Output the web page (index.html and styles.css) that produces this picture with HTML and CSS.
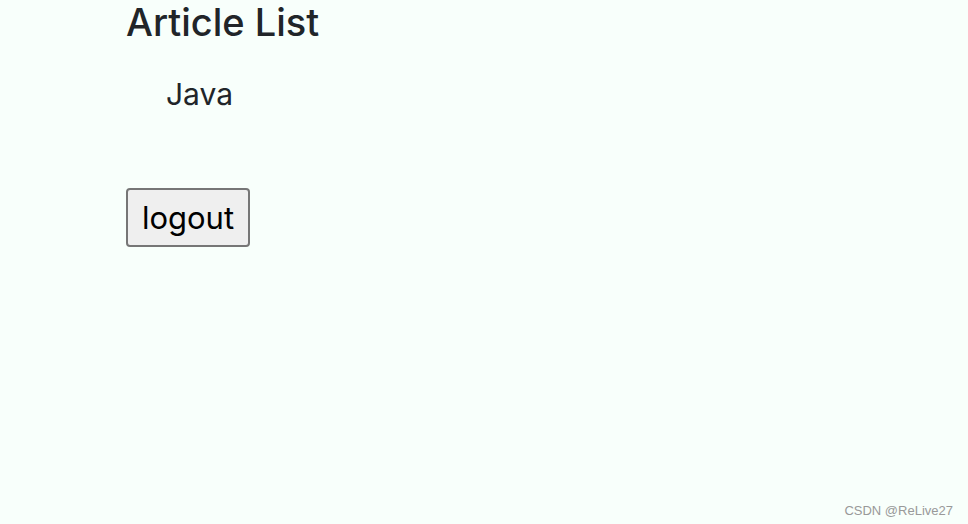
FILE: index.html
```html
<!DOCTYPE html>
<html>
<head>
<meta charset="utf-8">
<link rel="stylesheet" href="styles.css">
</head>
<body>
<div class="page">
  <h1 class="title">Article List</h1>
  <ul class="articles">
    <li class="article">Java</li>
  </ul>
  <button class="logout">logout</button>
</div>
<div class="watermark">CSDN @ReLive27</div>
</body>
</html>
```
FILE: styles.css
```css
html, body {
  margin: 0;
  height: 100%;
}
body {
  background: #f8fffb;
  color: #212529;
  font-family: Inter, "Liberation Sans", sans-serif;
  overflow: hidden;
  position: relative;
}
.page {
  padding-left: 126px;
  padding-top: 0;
}
.title {
  margin: 0;
  font-size: 38px;
  font-weight: 500;
  line-height: 44px;
}
.articles {
  list-style: none;
  margin: 32px 0 0 0;
  padding-left: 40px;
}
.article {
  font-size: 30px;
  line-height: 36px;
}
.logout {
  margin-top: 76px;
  font-family: Inter, "Liberation Sans", sans-serif;
  font-size: 31px;
  color: #000;
  background: #efefef;
  border: 2px solid #767676;
  border-radius: 4px;
  width: 124px;
  height: 59px;
  padding: 0;
}
.watermark {
  position: absolute;
  right: 15px;
  bottom: 6px;
  font-family: "Liberation Sans", Arial, sans-serif;
  font-size: 13px;
  color: #999;
}
```
